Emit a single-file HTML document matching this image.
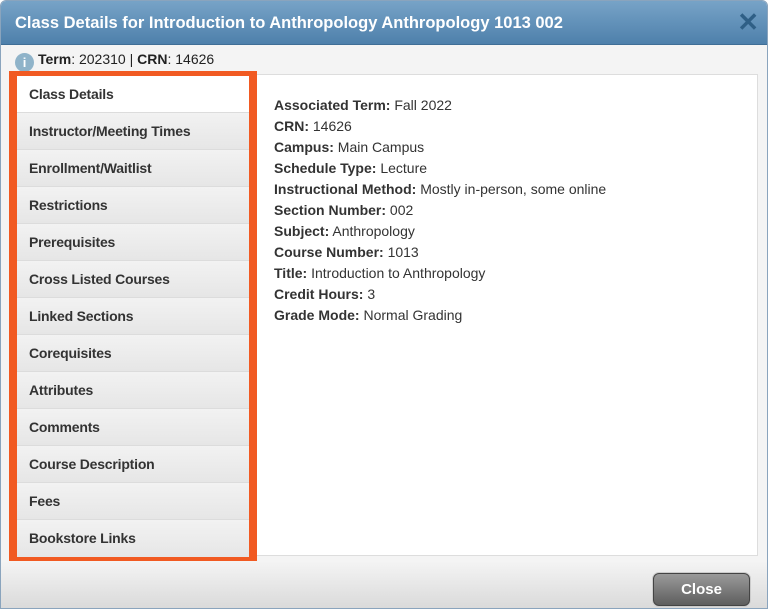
<!DOCTYPE html>
<html><head><style>
*{margin:0;padding:0;box-sizing:border-box}
body{width:768px;height:609px;overflow:hidden;font-family:"Liberation Sans",Arial,sans-serif;background:#fff;position:relative}
.dlg{position:absolute;left:0;top:0;width:768px;height:609px;border:1px solid #8aa4bd;border-radius:6px 6px 0 0;background:#f4f4f4;overflow:hidden}
.title{position:absolute;left:0;top:0;width:768px;height:44px;background:linear-gradient(#77a3c7,#4e80ab);color:#fff;font-weight:bold;font-size:16.5px;line-height:44px;padding-left:14px;border-bottom:1px solid #3f6e96}
.x{position:absolute;right:10px;top:8px;color:#2f5f86;font-size:26px;font-weight:bold;line-height:26px}
.info{position:absolute;left:14px;top:49px;font-size:14px;color:#222;line-height:18px}
.info .i{display:inline-block;width:19px;height:19px;border-radius:50%;background:#8fb3c9;color:#fff;font-size:13px;text-align:center;line-height:19px;vertical-align:-3px;margin-right:4px;font-weight:bold}
.panel{position:absolute;left:253px;top:73px;width:504px;height:482px;background:#fff;border:1px solid #ddd}
.tabs{position:absolute;left:8px;top:70px;width:248px;height:490px;border:8px solid #f15a22;border-top-width:5px;border-bottom-width:5px}
.tab{height:37px;border-bottom:1px solid #dcdcdc;background:linear-gradient(#f2f2f2,#e6e6e6);font-weight:bold;font-size:14px;color:#333;line-height:37px;padding-left:12px;letter-spacing:-0.2px}
.tab.a{background:#fff}
.content{position:absolute;left:273px;top:94px;font-size:14px;color:#333;line-height:21px}
.foot{position:absolute;left:0;top:560px;width:768px;height:49px;background:linear-gradient(#f4f4f4,#d9d9d9)}
.btn{position:absolute;left:652px;top:572px;width:97px;height:33px;border:1px solid #444;border-radius:6px;background:linear-gradient(#9a9a9a,#5e5e5e);color:#fff;font-weight:bold;font-size:15px;text-align:center;line-height:31px;box-shadow:0 0 0 1px #ccc}
</style></head><body>
<div class="dlg">
<div class="title">Class Details for Introduction to Anthropology Anthropology 1013 002<span class="x">✕</span></div>
<div class="info"><span class="i">i</span><b>Term</b>: 202310 | <b>CRN</b>: 14626</div>
<div class="panel"></div>
<div class="tabs">
<div class="tab a">Class Details</div>
<div class="tab">Instructor/Meeting Times</div>
<div class="tab">Enrollment/Waitlist</div>
<div class="tab">Restrictions</div>
<div class="tab">Prerequisites</div>
<div class="tab">Cross Listed Courses</div>
<div class="tab">Linked Sections</div>
<div class="tab">Corequisites</div>
<div class="tab">Attributes</div>
<div class="tab">Comments</div>
<div class="tab">Course Description</div>
<div class="tab">Fees</div>
<div class="tab" style="border-bottom:none">Bookstore Links</div>
</div>
<div class="content">
<b>Associated Term:</b> Fall 2022<br>
<b>CRN:</b> 14626<br>
<b>Campus:</b> Main Campus<br>
<b>Schedule Type:</b> Lecture<br>
<b>Instructional Method:</b> Mostly in-person, some online<br>
<b>Section Number:</b> 002<br>
<b>Subject:</b> Anthropology<br>
<b>Course Number:</b> 1013<br>
<b>Title:</b> Introduction to Anthropology<br>
<b>Credit Hours:</b> 3<br>
<b>Grade Mode:</b> Normal Grading
</div>
<div class="foot"></div>
<div class="btn">Close</div>
</div>
</body></html>
